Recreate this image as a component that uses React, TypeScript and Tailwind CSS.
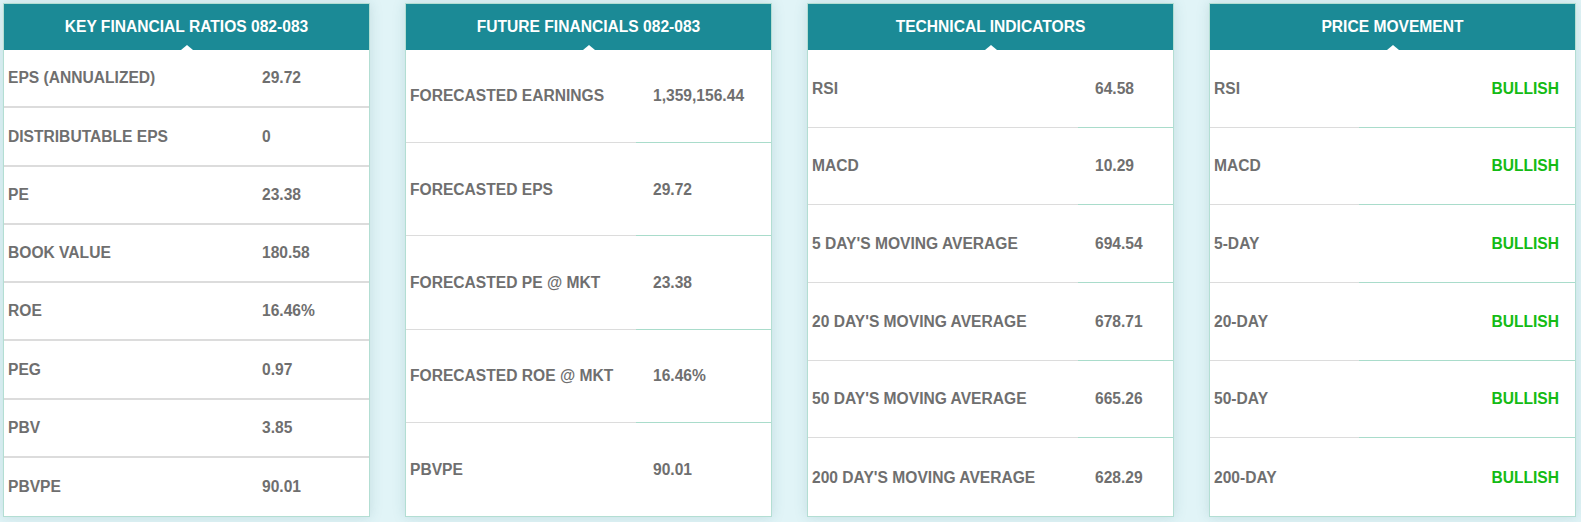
type Row = { label: string; value: string };

type CardProps = {
  title: string;
  rows: Row[];
  labelWidth: string;
  fullGray?: boolean;
  bullish?: boolean;
};

const keyRatios: Row[] = [
  { label: "EPS (ANNUALIZED)", value: "29.72" },
  { label: "DISTRIBUTABLE EPS", value: "0" },
  { label: "PE", value: "23.38" },
  { label: "BOOK VALUE", value: "180.58" },
  { label: "ROE", value: "16.46%" },
  { label: "PEG", value: "0.97" },
  { label: "PBV", value: "3.85" },
  { label: "PBVPE", value: "90.01" },
];

const future: Row[] = [
  { label: "FORECASTED EARNINGS", value: "1,359,156.44" },
  { label: "FORECASTED EPS", value: "29.72" },
  { label: "FORECASTED PE @ MKT", value: "23.38" },
  { label: "FORECASTED ROE @ MKT", value: "16.46%" },
  { label: "PBVPE", value: "90.01" },
];

const technical: Row[] = [
  { label: "RSI", value: "64.58" },
  { label: "MACD", value: "10.29" },
  { label: "5 DAY'S MOVING AVERAGE", value: "694.54" },
  { label: "20 DAY'S MOVING AVERAGE", value: "678.71" },
  { label: "50 DAY'S MOVING AVERAGE", value: "665.26" },
  { label: "200 DAY'S MOVING AVERAGE", value: "628.29" },
];

const movement: Row[] = [
  { label: "RSI", value: "BULLISH" },
  { label: "MACD", value: "BULLISH" },
  { label: "5-DAY", value: "BULLISH" },
  { label: "20-DAY", value: "BULLISH" },
  { label: "50-DAY", value: "BULLISH" },
  { label: "200-DAY", value: "BULLISH" },
];

const Card = ({ title, rows, labelWidth, fullGray, bullish }: CardProps) => {
  return (
    <div className="flex flex-col bg-white border border-[#b3ded3] shadow-[0_0_12px_rgba(60,120,130,0.18)]">
      {/* Header with notch */}
      <div className="relative h-[46px] bg-[#1b8a96] flex items-center justify-center text-white font-bold text-[15.6px]">
        {title}
        <span className="absolute bottom-0 left-1/2 -translate-x-1/2 w-0 h-0 border-l-[6px] border-r-[6px] border-b-[5px] border-l-transparent border-r-transparent border-b-white" />
      </div>

      <div className="flex-1 flex flex-col">
        {rows.map((row, i) => {
          const last = i === rows.length - 1;
          return (
            <div key={i} className="flex-1 flex">
              <div
                className={`${labelWidth} shrink-0 flex items-center pl-[4px] text-[#6f6f6f] font-bold text-[15.6px] ${
                  last ? "" : fullGray ? "border-b-2 border-[#dcdcdc]" : "border-b border-[#dcdcdc]"
                }`}
              >
                {row.label}
              </div>
              <div
                className={`flex-1 flex items-center font-bold text-[15.6px] ${
                  bullish ? "justify-end pr-[16px] text-[#14bb14]" : "pl-[17px] text-[#6f6f6f]"
                } ${last ? "" : fullGray ? "border-b-2 border-[#dcdcdc]" : "border-b border-[#a9dccb]"}`}
              >
                {row.value}
              </div>
            </div>
          );
        })}
      </div>
    </div>
  );
};

export default function App() {
  return (
    <div className="w-[1581px] h-[522px] bg-[#e1f4f7] pt-[3px] pl-[3px] pr-[5px]" style={{ fontFamily: '"Liberation Sans", Arial, sans-serif' }}>
      <div className="grid grid-cols-4 gap-[35px] h-[514px]">
        <Card title="KEY FINANCIAL RATIOS 082-083" rows={keyRatios} labelWidth="w-[241px]" fullGray />
        <Card title="FUTURE FINANCIALS 082-083" rows={future} labelWidth="w-[230px]" />
        <Card title="TECHNICAL INDICATORS" rows={technical} labelWidth="w-[270px]" />
        <Card title="PRICE MOVEMENT" rows={movement} labelWidth="w-[149px]" bullish />
      </div>
    </div>
  );
}
